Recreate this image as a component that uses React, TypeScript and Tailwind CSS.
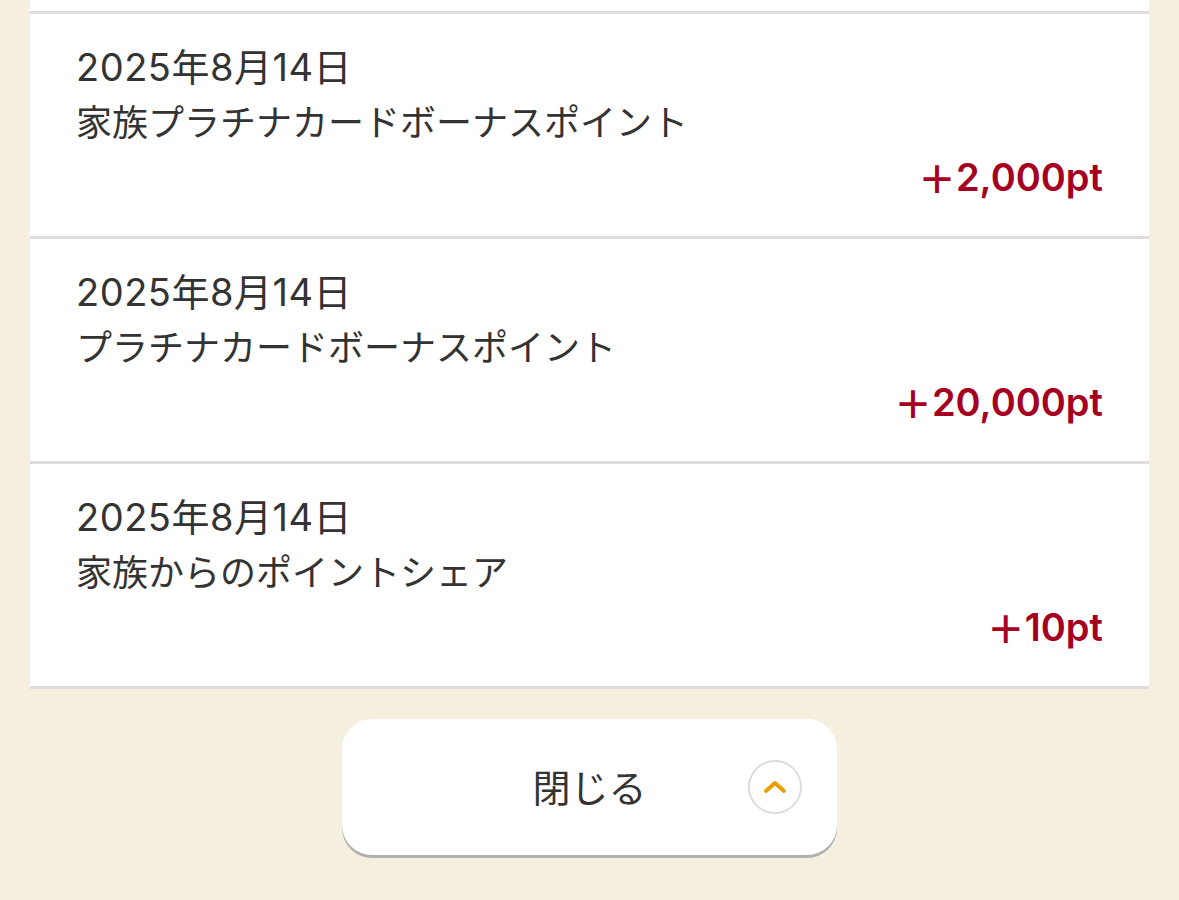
import React from "react";

const rows = [
  { date: "2025年8月14日", title: "家族プラチナカードボーナスポイント", amount: "2,000pt" },
  { date: "2025年8月14日", title: "プラチナカードボーナスポイント", amount: "20,000pt" },
  { date: "2025年8月14日", title: "家族からのポイントシェア", amount: "10pt" },
];

export default function App() {
  return (
    <div
      className="w-[1179px] h-[900px] bg-[#f5efe0] overflow-hidden px-[30px]"
      style={{ fontFamily: 'Inter, "Noto Sans CJK JP", "Noto Sans", sans-serif' }}
    >
      <div className="bg-white">
        <div className="h-[11px]" />
        {rows.map((r, i) => (
          <div key={i} className="border-t-[3px] border-[#dddddd] pt-[25px] pb-[33px] pl-[46px] pr-[46px]">
            <div className="h-[54px] text-[38px] leading-[56px] tracking-[0.5px] text-[#333333] overflow-visible">{r.date}</div>
            <div className="h-[54px] text-[36px] leading-[54px] text-[#333333]" style={{ fontFamily: '"Noto Sans CJK JP", sans-serif' }}>{r.title}</div>
            <div className="h-[56px] pt-[4px] flex justify-end items-center text-[38px] font-semibold text-[#a50021]">
              <span className="font-bold leading-none" style={{ fontFamily: '"Noto Sans CJK JP", sans-serif' }}>＋</span>
              <span className="leading-none">{r.amount}</span>
            </div>
          </div>
        ))}
        <div className="border-t-[3px] border-[#dddddd]" />
      </div>
      <div className="flex justify-center pt-[30px]">
        <button className="relative w-[495px] h-[136px] rounded-[30px] bg-white shadow-[0_3px_0_#b0b0b0] flex items-center justify-center">
          <span className="text-[38px] text-[#333333] -translate-y-[2px]" style={{ fontFamily: '"Noto Sans CJK JP", sans-serif' }}>閉じる</span>
          <span className="absolute right-[35px] top-1/2 -translate-y-1/2 w-[54px] h-[54px] rounded-full border-2 border-[#dddddd] flex items-center justify-center">
            <svg width="24" height="16" viewBox="0 0 24 16">
              <path d="M3 12 L12 4 L21 12" fill="none" stroke="#e8a000" strokeWidth="4" strokeLinecap="round" strokeLinejoin="round" />
            </svg>
          </span>
        </button>
      </div>
    </div>
  );
}
